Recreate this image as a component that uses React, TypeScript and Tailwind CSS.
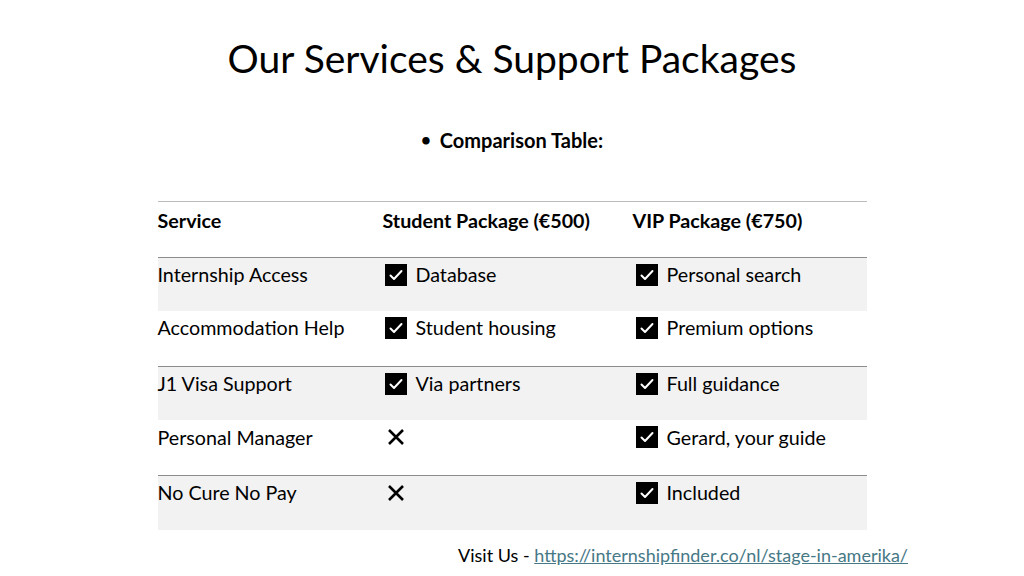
import { Fragment } from 'react'

type Cell = { ok: boolean; text?: string }
type Row = { service: string; student: Cell; vip: Cell }

const ROWS: Row[] = [
  { service: 'Internship Access', student: { ok: true, text: 'Database' }, vip: { ok: true, text: 'Personal search' } },
  { service: 'Accommodation Help', student: { ok: true, text: 'Student housing' }, vip: { ok: true, text: 'Premium options' } },
  { service: 'J1 Visa Support', student: { ok: true, text: 'Via partners' }, vip: { ok: true, text: 'Full guidance' } },
  { service: 'Personal Manager', student: { ok: false }, vip: { ok: true, text: 'Gerard, your guide' } },
  { service: 'No Cure No Pay', student: { ok: false }, vip: { ok: true, text: 'Included' } },
]

function CheckBox() {
  return (
    <svg width="22" height="22" viewBox="0 0 22 22" className="shrink-0">
      <rect width="22" height="22" fill="#000" />
      <path d="M5.5 11.5 L9 15 L16.5 7" fill="none" stroke="#fff" strokeWidth="2" strokeLinecap="round" strokeLinejoin="round" />
    </svg>
  )
}

function Cross() {
  return (
    <svg width="18" height="18" viewBox="0 0 18 18" className="shrink-0">
      <path d="M2 2 L16 16 M16 2 L2 16" stroke="#000" strokeWidth="2.6" />
    </svg>
  )
}

function PackageCell({ cell, shaded }: { cell: Cell; shaded: boolean }) {
  return (
    <div
      className={`h-[54.6px] pt-[6px] pl-[6px] ${shaded ? 'bg-[#f2f2f2] border-t border-[#8c8c8c]' : 'bg-white'}`}
    >
      {cell.ok ? (
        <div className="flex items-center gap-[9px] h-[22px]">
          <CheckBox />
          <span>{cell.text}</span>
        </div>
      ) : (
        <div className="flex items-center h-[22px] pl-[2px]">
          <Cross />
        </div>
      )}
    </div>
  )
}

export default function App() {
  return (
    <div
      className="w-[1024px] h-[576px] bg-white text-black flex flex-col"
      style={{ fontFamily: 'Lato, "Open Sans", sans-serif' }}
    >
      <h1 className="text-center text-[39px] leading-none pt-[39px] h-[118px]">
        Our Services &amp; Support Packages
      </h1>

      <div className="flex justify-center items-center gap-[9px] h-[44px] text-[20px] font-bold">
        <span className="text-[17px]">•</span>
        <span>Comparison Table:</span>
      </div>

      <div className="w-[709px] mx-auto mt-[39px] border-t border-[#bcbcbc] grid grid-cols-[221px_251px_237px] text-[19.7px]">
        <div className="h-[54.6px] pt-[8px] font-bold">
          <div className="h-[22px] flex items-center">Service</div>
        </div>
        <div className="h-[54.6px] pt-[8px] pl-[4px] font-bold">
          <div className="h-[22px] flex items-center">Student Package (€500)</div>
        </div>
        <div className="h-[54.6px] pt-[8px] pl-[3px] font-bold">
          <div className="h-[22px] flex items-center">VIP Package (€750)</div>
        </div>
        {ROWS.map((r, i) => {
          const shaded = i % 2 === 0
          return (
            <Fragment key={r.service}>
              <div
                className={`h-[54.6px] pt-[6px] ${shaded ? 'bg-[#f2f2f2] border-t border-[#8c8c8c]' : 'bg-white'}`}
              >
                <div className="h-[22px] flex items-center">{r.service}</div>
              </div>
              <PackageCell cell={r.student} shaded={shaded} />
              <PackageCell cell={r.vip} shaded={shaded} />
            </Fragment>
          )
        })}
      </div>

      <div className="flex justify-end pr-[116px] pt-[12px] text-[18px]">
        <span>Visit Us -&nbsp;</span>
        <a href="#" className="text-[#467886] underline">
          https://internshipfinder.co/nl/stage-in-amerika/
        </a>
      </div>
    </div>
  )
}
